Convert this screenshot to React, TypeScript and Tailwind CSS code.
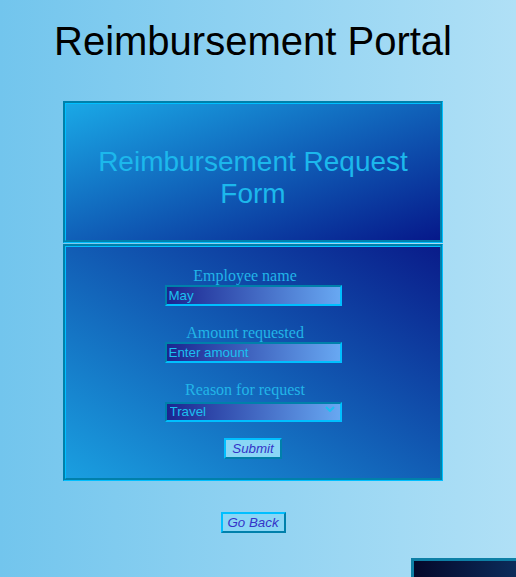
import React from "react";

export default function App() {
  return (
    <div
      className="relative w-[516px] h-[577px] overflow-hidden bg-[linear-gradient(to_right,#72c5ed,#b0e0f6)]"
      style={{ fontFamily: '"Liberation Sans", Arial, sans-serif' }}
    >
      <div className="w-[506px] flex flex-col items-center">
        <h1 className="mt-[18px] text-[40px] leading-[46px] text-black font-normal">
          Reimbursement Portal
        </h1>

        <div className="mt-[37px] w-[380px] flex flex-col gap-[1px]">
          <div className="h-[142px] border-[3px] [border-style:groove] border-[#00bfff] bg-[linear-gradient(to_bottom_right,#1aa8e6,#06188a)] pt-[42px] text-center">
            <h2 className="text-[28px] leading-[32px] text-[#1cb8ec] font-normal">
              Reimbursement Request
              <br />
              Form
            </h2>
          </div>

          <div className="h-[237px] border-[3px] [border-style:groove] border-[#00bfff] bg-[linear-gradient(to_top_right,#1a9fe0,#0a1c8a)] pt-[20px] flex flex-col items-center">
            <label
              className="block w-full pr-[16px] text-center text-[16px] leading-[18px] text-[#22b5e8]"
              style={{ fontFamily: '"Liberation Serif", "Times New Roman", serif' }}
            >
              Employee name
            </label>
            <input
              defaultValue="May"
              className="w-[177px] h-[21px] border-2 [border-style:inset] border-[#00bfff] bg-[linear-gradient(to_right,#1a2590,#68a8f2)] px-[2px] text-[13.33px] text-[#1cc0f0] outline-none"
              style={{ fontFamily: '"Liberation Sans", Arial, sans-serif' }}
            />

            <label
              className="mt-[18px] block w-full pr-[16px] text-center text-[16px] leading-[18px] text-[#22b5e8]"
              style={{ fontFamily: '"Liberation Serif", "Times New Roman", serif' }}
            >
              Amount requested
            </label>
            <input
              placeholder="Enter amount"
              className="w-[177px] h-[21px] border-2 [border-style:inset] border-[#00bfff] bg-[linear-gradient(to_right,#1a2590,#68a8f2)] px-[2px] text-[13.33px] text-[#1cc0f0] placeholder:text-[#1cc0f0] outline-none"
              style={{ fontFamily: '"Liberation Sans", Arial, sans-serif' }}
            />

            <label
              className="mt-[18px] block w-full pr-[16px] text-center text-[16px] leading-[18px] text-[#22b5e8]"
              style={{ fontFamily: '"Liberation Serif", "Times New Roman", serif' }}
            >
              Reason for request
            </label>
            <div className="relative w-[177px] h-[20px]">
              <select
                defaultValue="Travel"
                className="appearance-none w-[177px] h-[20px] border-2 [border-style:inset] border-[#00bfff] bg-[linear-gradient(to_right,#1a2590,#68a8f2)] pl-[3px] text-[13.33px] leading-[16px] text-[#1cc0f0] outline-none"
                style={{ fontFamily: '"Liberation Sans", Arial, sans-serif' }}
              >
                <option>Travel</option>
                <option>Meals</option>
                <option>Supplies</option>
              </select>
              <svg
                className="pointer-events-none absolute right-[7px] top-[7px]"
                width="10"
                height="6"
                viewBox="0 0 10 6"
              >
                <path d="M1 1 L5 5 L9 1" fill="none" stroke="#1cc0f0" strokeWidth="2" />
              </svg>
            </div>

            <button
              className="mt-[19px] w-[58px] h-[21px] border-2 [border-style:outset] border-[#00bfff] bg-[#8ad6f5] text-[13.33px] italic text-[#3434c8] leading-[15px]"
              style={{ fontFamily: '"Liberation Sans", Arial, sans-serif' }}
            >
              Submit
            </button>
          </div>
        </div>

        <button
          className="mt-[31px] w-[65px] h-[21px] border-2 [border-style:outset] border-[#00bfff] bg-[#8ad6f5] text-[13.33px] italic text-[#3434c8] leading-[15px]"
          style={{ fontFamily: '"Liberation Sans", Arial, sans-serif' }}
        >
          Go Back
        </button>
      </div>

      <div className="absolute left-[411px] top-[558px] w-[200px] h-[80px] border-[3px] border-[#0e80a6] bg-[linear-gradient(to_right,#04082a,#124c86)]" />
    </div>
  );
}
